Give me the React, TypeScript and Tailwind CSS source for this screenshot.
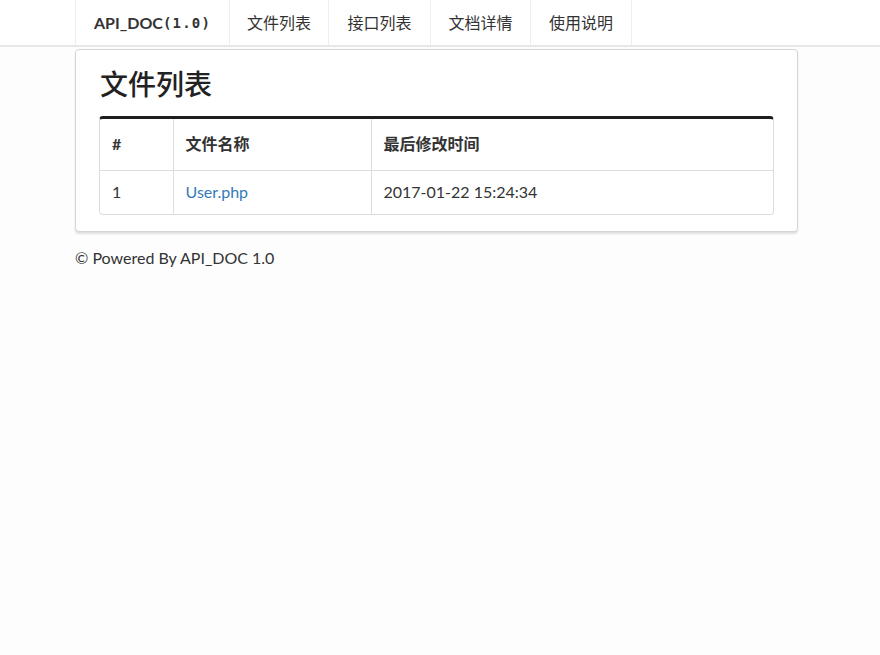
import React from "react"

const navItems = [
  { label: "文件列表", w: "w-[99px]" },
  { label: "接口列表", w: "w-[102px]" },
  { label: "文档详情", w: "w-[100px]" },
  { label: "使用说明", w: "w-[101px]" },
]

const files = [{ id: 1, name: "User.php", modified: "2017-01-22 15:24:34" }]

export default function App() {
  return (
    <div
      className="min-h-[655px] bg-[#fdfdfd] text-[#333] text-[16px]"
      style={{ fontFamily: 'Lato, "Noto Sans CJK SC", sans-serif' }}
    >
      <nav className="bg-white border-b-2 border-[#e7e7e7]">
        <ul className="flex ml-[75px] h-[45px]">
          <li className="flex items-center px-[18px] border-l border-r border-[#eee] font-bold text-[#333]">
            API_DOC
            <span style={{ fontFamily: '"DejaVu Sans Mono", monospace' }} className="text-[14px] tracking-[1.2px] pt-px">
              (1.0)
            </span>
          </li>
          {navItems.map((item) => (
            <li key={item.label} className={`${item.w} flex items-center justify-center border-r border-[#eee] text-[#333]`}>
              {item.label}
            </li>
          ))}
        </ul>
      </nav>

      <div className="ml-[75px] w-[723px] mt-[2px]">
        <div className="bg-white border border-[#d6d6d6] rounded-[4px] shadow-[0_2px_2px_rgba(0,0,0,0.12)] px-[23px] pt-[17px] pb-[16px]">
          <h1 className="text-[28px] leading-[34px] font-medium text-[#222] pl-px mb-[15px]">文件列表</h1>

          <div className="border border-[#ddd] border-t-[3px] border-t-[#1e1e1e] rounded-[4px] overflow-hidden">
            <table className="w-full border-collapse">
              <thead>
                <tr className="border-b border-[#ddd]">
                  <th className="w-[73px] text-left font-bold px-[12px] h-[51px] border-r border-[#ddd]">#</th>
                  <th className="w-[198px] text-left font-bold px-[12px] border-r border-[#ddd]">文件名称</th>
                  <th className="text-left font-bold px-[12px]">最后修改时间</th>
                </tr>
              </thead>
              <tbody>
                {files.map((f) => (
                  <tr key={f.id}>
                    <td className="px-[12px] h-[44px] border-r border-[#ddd]">{f.id}</td>
                    <td className="px-[12px] border-r border-[#ddd]">
                      <a href="#" className="text-[#337ab7]">
                        {f.name}
                      </a>
                    </td>
                    <td className="px-[12px]">{f.modified}</td>
                  </tr>
                ))}
              </tbody>
            </table>
          </div>
        </div>

        <p className="mt-[14px]">© Powered By API_DOC 1.0</p>
      </div>
    </div>
  )
}
